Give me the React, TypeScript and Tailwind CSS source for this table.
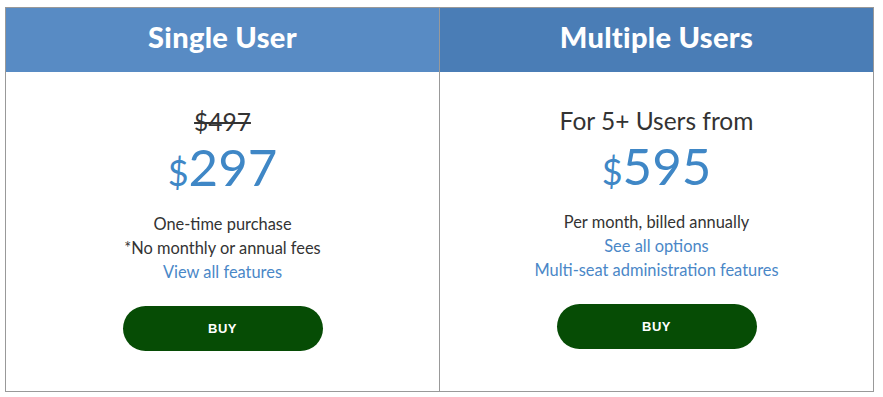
export default function App() {
  const font = { fontFamily: "Lato, 'Open Sans', sans-serif" };
  return (
    <div className="bg-white w-[883px] h-[397px] pt-[7px] pl-[5px]" style={font}>
      <div className="flex w-[869px] h-[385px] border border-[#999]">
        {/* single */}
        <div className="flex flex-col w-[434px] border-r border-[#999]">
          <div className="h-[64px] bg-[#588bc4] flex items-center justify-center pb-[7px]">
            <h2 className="text-white font-black text-[29px] tracking-[0.3px]">Single User</h2>
          </div>
          <div className="flex flex-col items-center pt-[34px]">
            <div className="text-[24.5px] leading-[32px] text-[#333] line-through decoration-[1.5px]">$497</div>
            <div className="flex items-baseline text-[#3f87c6] leading-[56px] mt-[1px]">
              <span className="text-[36px]">$</span>
              <span className="text-[51px]">297</span>
            </div>
            <div className="text-[16.4px] leading-[24px] text-[#333] mt-[12px] text-center">
              <p>One-time purchase</p>
              <p>*No monthly or annual fees</p>
              <a href="#" className="text-[#4a87c7]">View all features</a>
            </div>
            <button className="mt-[22px] w-[200px] h-[45px] rounded-full bg-[#064c05] text-white text-[13px] font-bold tracking-[0.5px]" style={{ fontFamily: "'Liberation Sans', Arial, sans-serif" }}>
              BUY
            </button>
          </div>
        </div>
        {/* multiple */}
        <div className="flex flex-col flex-1">
          <div className="h-[64px] bg-[#4a7db6] flex items-center justify-center pb-[7px]">
            <h2 className="text-white font-black text-[29px] tracking-[0.3px]">Multiple Users</h2>
          </div>
          <div className="flex flex-col items-center pt-[33px]">
            <div className="text-[24.5px] leading-[32px] text-[#333]">For 5+ Users from</div>
            <div className="flex items-baseline text-[#3f87c6] leading-[56px] mt-[1px]">
              <span className="text-[36px]">$</span>
              <span className="text-[51px]">595</span>
            </div>
            <div className="flex flex-col items-center text-[16.4px] leading-[24px] text-[#333] mt-[11px] text-center">
              <p>Per month, billed annually</p>
              <a href="#" className="text-[#4a87c7]">See all options</a>
              <a href="#" className="text-[#4a87c7]">Multi-seat administration features</a>
            </div>
            <button className="mt-[22px] w-[200px] h-[45px] rounded-full bg-[#064c05] text-white text-[13px] font-bold tracking-[0.5px]" style={{ fontFamily: "'Liberation Sans', Arial, sans-serif" }}>
              BUY
            </button>
          </div>
        </div>
      </div>
    </div>
  );
}
